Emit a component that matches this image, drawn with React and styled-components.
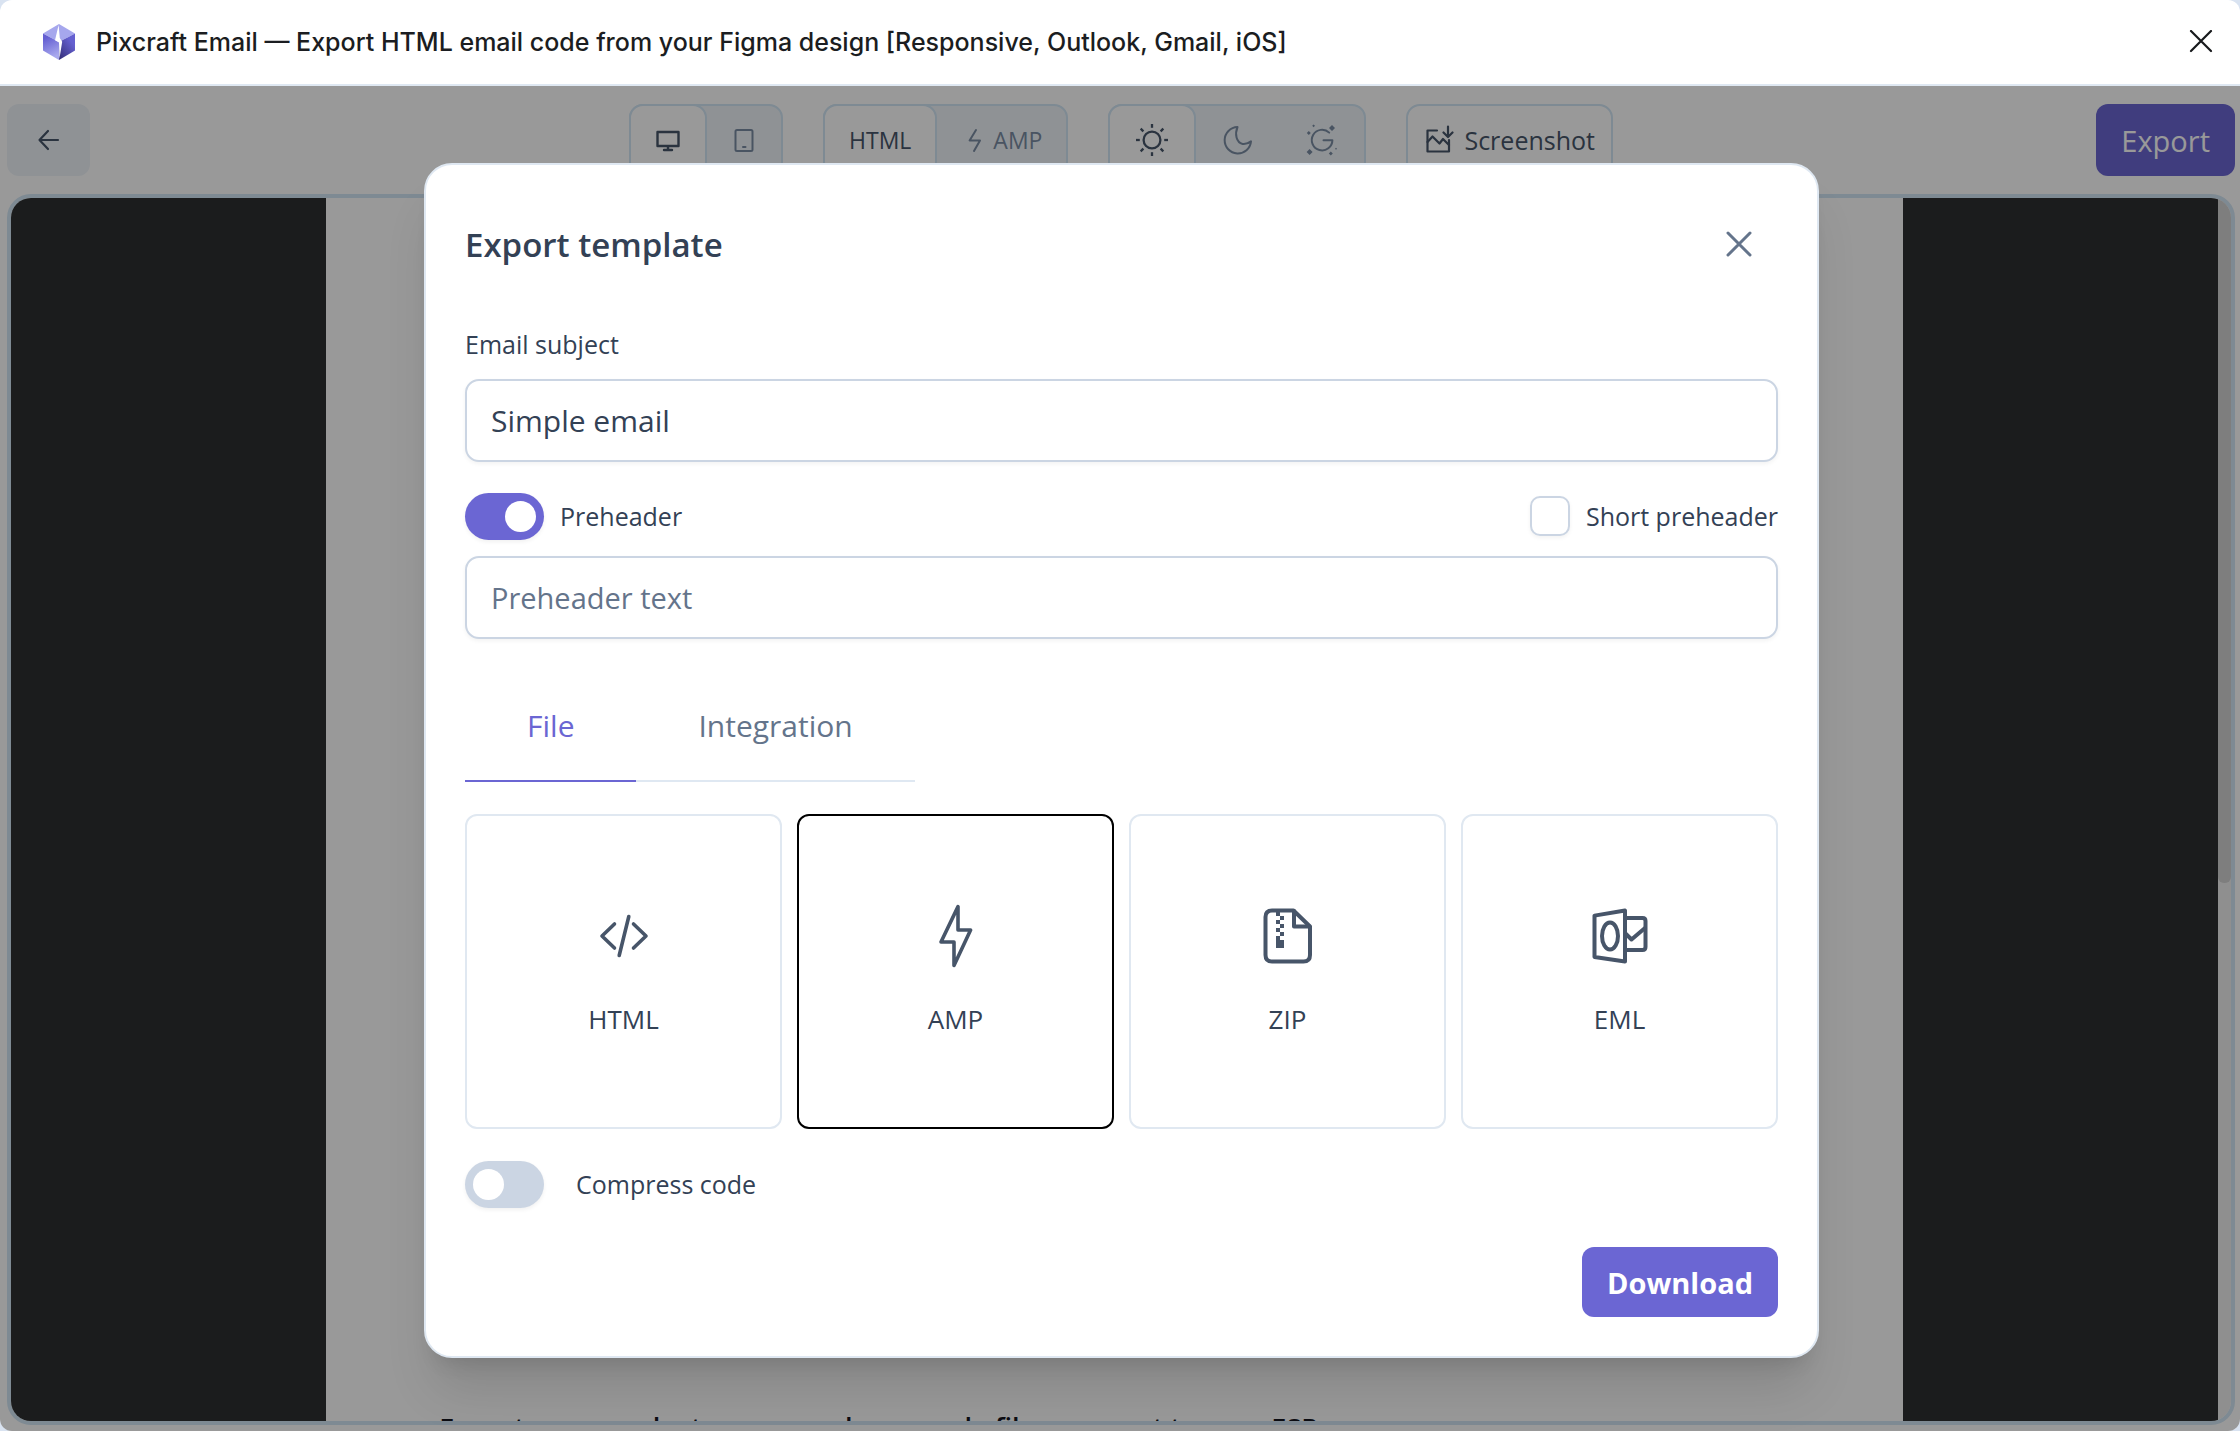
import React from "react";
import styled, { createGlobalStyle } from "styled-components";

const color = {
  accent: "#6b66d3",
  ink: "#334155",
  icon: "#475569",
  muted: "#64748b",
  faded: "#7b8ca3",
  line: "#dfe8f2",
  field: "#cbd5e3",
  frame: "#d2e6f5",
  tint: "#eef4f9",
};

const GlobalStyle = createGlobalStyle`
  *, *::before, *::after { box-sizing: border-box; }
  body {
    margin: 0;
    background: #d9e3f1;
    color: ${color.ink};
    font-family: "Open Sans", "Noto Sans", sans-serif;
    font-size: 25px;
  }
  button, input { font: inherit; color: inherit; margin: 0; }
  button { cursor: pointer; }
  svg { display: block; flex: none; }
`;

const Window = styled.div`
  display: flex;
  flex-direction: column;
  min-height: 100vh;
  border-radius: 12px;
  overflow: hidden;
  background: #fff;
`;

const TitleBar = styled.header`
  display: flex;
  align-items: center;
  gap: 20px;
  height: 86px;
  padding: 0 19px 0 42px;
  border-bottom: 2px solid ${color.line};
`;

const PluginName = styled.h1`
  flex: 1;
  margin: 0;
  font: 500 25px/36px Inter, sans-serif;
  color: #1b1d21;
`;

const IconButton = styled.button`
  display: grid;
  place-items: center;
  width: 40px;
  height: 40px;
  padding: 0;
  border: 0;
  background: none;
  color: ${(p) => p.$color};
`;

const Stage = styled.div`
  flex: 1;
  display: grid;
  > * { grid-area: 1 / 1; }
`;

const Workspace = styled.main`
  display: flex;
  flex-direction: column;
  padding: 0 5px 6px 7px;
`;

const Toolbar = styled.div`
  display: grid;
  grid-template-columns: 1fr auto 1fr;
  align-items: center;
  padding: 18px 0;
`;

const ToolGroups = styled.div`
  display: flex;
  gap: 40px;
`;

const BackButton = styled.button`
  display: grid;
  place-items: center;
  width: 83px;
  height: 72px;
  border: 0;
  border-radius: 12px;
  background: ${color.tint};
  color: ${color.icon};
`;

const Segments = styled.div`
  display: flex;
  height: 72px;
  border: 2px solid ${color.frame};
  border-radius: 14px;
  background: ${color.tint};
`;

const Segment = styled.button`
  display: flex;
  align-items: center;
  gap: 6px;
  padding: 0 24px;
  border: 0 solid ${color.frame};
  border-radius: 14px;
  background: none;
  color: ${color.faded};
  font-size: 23px;

  &[aria-pressed="true"] {
    margin: -2px 0 -2px -2px;
    border-width: 2px;
    background: #fff;
    color: ${color.icon};
  }
`;

const OutlineButton = styled.button`
  display: flex;
  align-items: center;
  gap: 10px;
  height: 72px;
  padding: 0 16px;
  border: 2px solid ${color.frame};
  border-radius: 14px;
  background: #fff;
  color: ${color.icon};
`;

const PrimaryButton = styled.button`
  justify-self: end;
  align-self: flex-end;
  height: ${(p) => p.$height};
  padding: 0 25px;
  border: 0;
  border-radius: 12px;
  background: ${color.accent};
  color: #fff;
  font-size: 29px;
  font-weight: ${(p) => p.$weight};
`;

const Preview = styled.div`
  flex: 1;
  display: flex;
  border: 4px solid ${color.frame};
  border-radius: 24px;
  overflow: hidden;
`;

const Canvas = styled.div`
  flex: 1;
  display: grid;
  grid-template-columns: 1fr 5fr 1fr;
  background: #2d2f31;
`;

const EmailPage = styled.article`
  grid-column: 2;
  display: flex;
  flex-direction: column;
  justify-content: flex-end;
  padding-left: 113px;
  background: #fff;
`;

const EmailHeading = styled.h2`
  height: 13px;
  margin: 0;
  overflow: hidden;
  white-space: nowrap;
  color: #14151f;
  font: 600 27px/40px "Open Sans", sans-serif;
`;

const ScrollTrack = styled.div`
  width: 13px;
  background: #efefef;
`;

const ScrollThumb = styled.div`
  height: 56%;
  border-radius: 0 0 6px 6px;
  background: #d2d2d2;
`;

const Overlay = styled.div`
  position: relative;
  display: grid;
  place-items: center;
  padding: 4px 4px 0 7px;
  background: rgba(0, 0, 0, 0.4);
`;

const Dialog = styled.section`
  display: flex;
  flex-direction: column;
  width: min(1395px, 100%);
  padding: 56px 39px 39px;
  border: 2px solid ${color.line};
  border-radius: 28px;
  background: #fff;
  box-shadow: 0 40px 50px -10px rgba(0, 0, 0, 0.12), 0 16px 20px -12px rgba(0, 0, 0, 0.12);
`;

const DialogHead = styled.div`
  display: flex;
  align-items: center;
  justify-content: space-between;
  height: 48px;
  margin-bottom: 56px;
  padding-right: 19px;
`;

const DialogTitle = styled.h2`
  margin: 0;
  font-size: 33px;
  line-height: 48px;
  font-weight: 600;
`;

const FieldLabel = styled.label`
  margin-bottom: 16px;
  line-height: 38px;
`;

const TextField = styled.input`
  width: 100%;
  height: 83px;
  padding: 0 24px;
  border: 2px solid ${color.field};
  border-radius: 14px;
  background: #fff;
  box-shadow: 0 2px 4px rgba(0, 0, 0, 0.05);
  font-size: 30px;

  &::placeholder { color: ${color.muted}; opacity: 1; font-size: 29px; }
`;

const OptionRow = styled.div`
  display: flex;
  align-items: center;
  justify-content: space-between;
  height: 48px;
  margin: ${(p) => p.$margin};
`;

const Option = styled.label`
  display: flex;
  align-items: center;
  gap: ${(p) => p.$gap};
`;

const Switch = styled.input`
  appearance: none;
  display: flex;
  align-items: center;
  width: 79px;
  height: 47px;
  padding: 0 8px;
  border-radius: 24px;
  background: ${color.field};
  box-shadow: 0 2px 4px rgba(0, 0, 0, 0.06);

  &::before {
    content: "";
    width: 31px;
    height: 31px;
    border-radius: 50%;
    background: #fff;
  }

  &:checked {
    justify-content: flex-end;
    background: ${color.accent};
  }
`;

const TickBox = styled.input`
  appearance: none;
  width: 40px;
  height: 40px;
  border: 2px solid ${color.field};
  border-radius: 10px;
  background: #fff;
  box-shadow: 0 2px 4px rgba(0, 0, 0, 0.05);
  &:checked { background: ${color.accent}; }
`;

const Tabs = styled.div`
  display: flex;
  align-self: flex-start;
  margin: 32px 0;
`;

const Tab = styled.button`
  padding: 32px 62px;
  border: 0;
  border-bottom: 2px solid ${color.line};
  background: none;
  color: ${color.muted};
  font-size: 30px;
  line-height: 45px;

  &[aria-selected="true"] {
    border-color: ${color.accent};
    color: ${color.accent};
  }
`;

const Formats = styled.div`
  display: grid;
  grid-template-columns: repeat(4, 1fr);
  gap: 15px;
`;

const FormatCard = styled.button`
  display: flex;
  flex-direction: column;
  align-items: center;
  justify-content: center;
  gap: 31px;
  height: 315px;
  border: 2px solid ${(p) => (p.$active ? "#000" : "#e0e8f1")};
  border-radius: 12px;
  background: #fff;
  font-size: 26px;
  line-height: 40px;
  svg { color: ${color.icon}; }
`;

function Icon({ size, stroke = 2, children }) {
  return (
    <svg
      width={size}
      height={size}
      viewBox={`0 0 ${size} ${size}`}
      fill="none"
      stroke="currentColor"
      strokeWidth={stroke}
      strokeLinecap="round"
      strokeLinejoin="round"
      aria-hidden="true"
    >
      {children}
    </svg>
  );
}

const Logo = () => (
  <svg width="34" height="38" viewBox="0 0 34 38" aria-hidden="true">
    <defs>
      <linearGradient id="left" x1="0" y1="0" x2="0.3" y2="1">
        <stop offset="0.2" stopColor="#645fd2" />
        <stop offset="1" stopColor="#a9a9ee" />
      </linearGradient>
      <linearGradient id="right" x1="1" y1="0" x2="0.2" y2="1">
        <stop offset="0.3" stopColor="#6560d0" />
        <stop offset="1" stopColor="#38337f" />
      </linearGradient>
    </defs>
    <path d="M17 1 L33 10.5 L17 19 L1 10.5Z" fill="#a6a7ed" />
    <path d="M1 10.5 L17 19 V37 L1 27.5Z" fill="url(#left)" />
    <path d="M33 10.5 L17 19 V37 L33 27.5Z" fill="url(#right)" />
    <path d="M16.6 2 L17.8 15 L20.2 18.8 L17.4 36 L17 19.5 L13 17.2 Z" fill="#fff" />
  </svg>
);

const Sun = () => (
  <Icon size={36} stroke={2.3}>
    <circle cx="18" cy="18" r="8.4" />
    {[0, 45, 90, 135, 180, 225, 270, 315].map((a) => (
      <path key={a} d="M18 2V5.8" transform={`rotate(${a} 18 18)`} strokeLinecap="butt" />
    ))}
  </Icon>
);

const sparkle = (x, y, r) => `M${x} ${y - r}L${x + r} ${y}L${x} ${y + r}L${x - r} ${y}Z`;

const GoogleDark = () => (
  <Icon size={36}>
    <path d="M25.2 10.6A10.3 10.3 0 1 0 28.4 18.2H19.5" />
    <path
      d={[[28, 6, 3], [4.8, 11, 2], [9.6, 3.8, 1.4], [5.6, 30, 3], [26.8, 31.4, 2], [32, 26.8, 1]]
        .map((s) => sparkle(...s))
        .join("")}
      fill="currentColor"
      stroke="none"
    />
  </Icon>
);

const CodeIcon = () => (
  <Icon size={64} stroke={3.6}>
    <path d="M22.5 20L10 32L22.5 44M41.5 20L54 32L41.5 44M36.8 12.5L27.2 51.5" />
  </Icon>
);

const BoltIcon = () => (
  <Icon size={64} stroke={3.6}>
    <path d="M34 2.6V26H46.6L30 61.4V38H17Z" />
  </Icon>
);

const ZipIcon = () => (
  <Icon size={64} stroke={4}>
    <path d="M37.5 6.5H16Q9.5 6.5 9.5 13V51Q9.5 57.5 16 57.5H47.5Q54 57.5 54 51V22.5Z" />
    <path d="M38 7V22.5H53.5" />
    <path
      d="M20 8h4v4h-4zM24 12h4v4h-4zM20 16h4v4h-4zM24 20h4v4h-4zM20 24h4v4h-4zM24 28h4v4h-4zM20 32h4v4h-4zM20 36h8v8h-8z"
      fill="currentColor"
      stroke="none"
    />
  </Icon>
);

const OutlookIcon = () => (
  <Icon size={64} stroke={4}>
    <path d="M6.5 11.6L37 6.5V57.5L6.5 53Z" />
    <ellipse cx="22" cy="32" rx="8" ry="13.5" />
    <path d="M38 14H54.5Q57.5 14 57.5 17V43Q57.5 46 54.5 46H38" />
    <path d="M38 30L43.5 35.5L57 24" />
  </Icon>
);

const formats = [
  { name: "HTML", Glyph: CodeIcon },
  { name: "AMP", Glyph: BoltIcon, active: true },
  { name: "ZIP", Glyph: ZipIcon },
  { name: "EML", Glyph: OutlookIcon },
];

export default function App() {
  return (
    <Window>
      <GlobalStyle />
      <TitleBar>
        <Logo />
        <PluginName>
          Pixcraft Email — Export HTML email code from your Figma design [Responsive, Outlook, Gmail, iOS]
        </PluginName>
        <IconButton $color="#17191c" aria-label="Close plugin">
          <Icon size={24} stroke={2.2}>
            <path d="M2 1L22 21M22 1L2 21" />
          </Icon>
        </IconButton>
      </TitleBar>

      <Stage>
        <Workspace>
          <Toolbar>
            <BackButton aria-label="Back">
              <Icon size={24} stroke={2.2}>
                <path d="M11 3L2.5 12L11 21M2.5 12H21" />
              </Icon>
            </BackButton>
            <ToolGroups>
              <Segments>
                <Segment aria-pressed="true" aria-label="Desktop">
                  <Icon size={26} stroke={2.4}>
                    <path d="M2.5 5H23.5V19H2.5ZM13 19V23M9 23H17" />
                  </Icon>
                </Segment>
                <Segment aria-pressed="false" aria-label="Mobile">
                  <Icon size={26}>
                    <rect x="4.5" y="3" width="17" height="21" rx="1.5" />
                    <path d="M12 20H14.5" />
                  </Icon>
                </Segment>
              </Segments>
              <Segments>
                <Segment aria-pressed="true">HTML</Segment>
                <Segment aria-pressed="false">
                  <Icon size={26}>
                    <path d="M15 3L8.6 13.4H19L13 24" />
                  </Icon>
                  AMP
                </Segment>
              </Segments>
              <Segments>
                <Segment aria-pressed="true" aria-label="Light mode">
                  <Sun />
                </Segment>
                <Segment aria-pressed="false" aria-label="Dark mode">
                  <Icon size={36}>
                    <path d="M17.5 5C14.6 12 16.2 20.6 22.6 22C26 22.4 29 21 31 19.4A13.2 13.2 0 1 1 17.5 5Z" />
                  </Icon>
                </Segment>
                <Segment aria-pressed="false" aria-label="Gmail dark mode">
                  <GoogleDark />
                </Segment>
              </Segments>
              <OutlineButton>
                <Icon size={30} stroke={2.2}>
                  <path d="M13 5.5H3.5V26.5H25V15" />
                  <path d="M3.5 17L8.5 11.5L15.5 18.5L19 14L25 20" />
                  <path d="M24 1.5V11.5M19.5 7.5L24 12L28.5 7.5" />
                </Icon>
                Screenshot
              </OutlineButton>
            </ToolGroups>
            <PrimaryButton $height="72px" $weight={400}>Export</PrimaryButton>
          </Toolbar>

          <Preview>
            <Canvas>
              <EmailPage>
                <EmailHeading>Export your product source and save code file or export to your ESP</EmailHeading>
              </EmailPage>
            </Canvas>
            <ScrollTrack>
              <ScrollThumb />
            </ScrollTrack>
          </Preview>
        </Workspace>

        <Overlay>
          <Dialog role="dialog" aria-labelledby="export-title">
            <DialogHead>
              <DialogTitle id="export-title">Export template</DialogTitle>
              <IconButton $color={color.muted} aria-label="Close">
                <Icon size={28} stroke={3}>
                  <path d="M3 2L25 24M25 2L3 24" />
                </Icon>
              </IconButton>
            </DialogHead>

            <FieldLabel htmlFor="subject">Email subject</FieldLabel>
            <TextField id="subject" defaultValue="Simple email" />

            <OptionRow $margin="30px 0 16px">
              <Option $gap="16px">
                <Switch type="checkbox" role="switch" defaultChecked />
                Preheader
              </Option>
              <Option $gap="16px">
                <TickBox type="checkbox" />
                Short preheader
              </Option>
            </OptionRow>
            <TextField placeholder="Preheader text" aria-label="Preheader text" />

            <Tabs role="tablist">
              <Tab role="tab" aria-selected="true">File</Tab>
              <Tab role="tab" aria-selected="false">Integration</Tab>
            </Tabs>

            <Formats>
              {formats.map(({ name, Glyph, active }) => (
                <FormatCard key={name} $active={active}>
                  <Glyph />
                  {name}
                </FormatCard>
              ))}
            </Formats>

            <OptionRow $margin="31px 0 39px">
              <Option $gap="32px">
                <Switch type="checkbox" role="switch" />
                Compress code
              </Option>
            </OptionRow>

            <PrimaryButton $height="70px" $weight={700}>Download</PrimaryButton>
          </Dialog>
        </Overlay>
      </Stage>
    </Window>
  );
}
